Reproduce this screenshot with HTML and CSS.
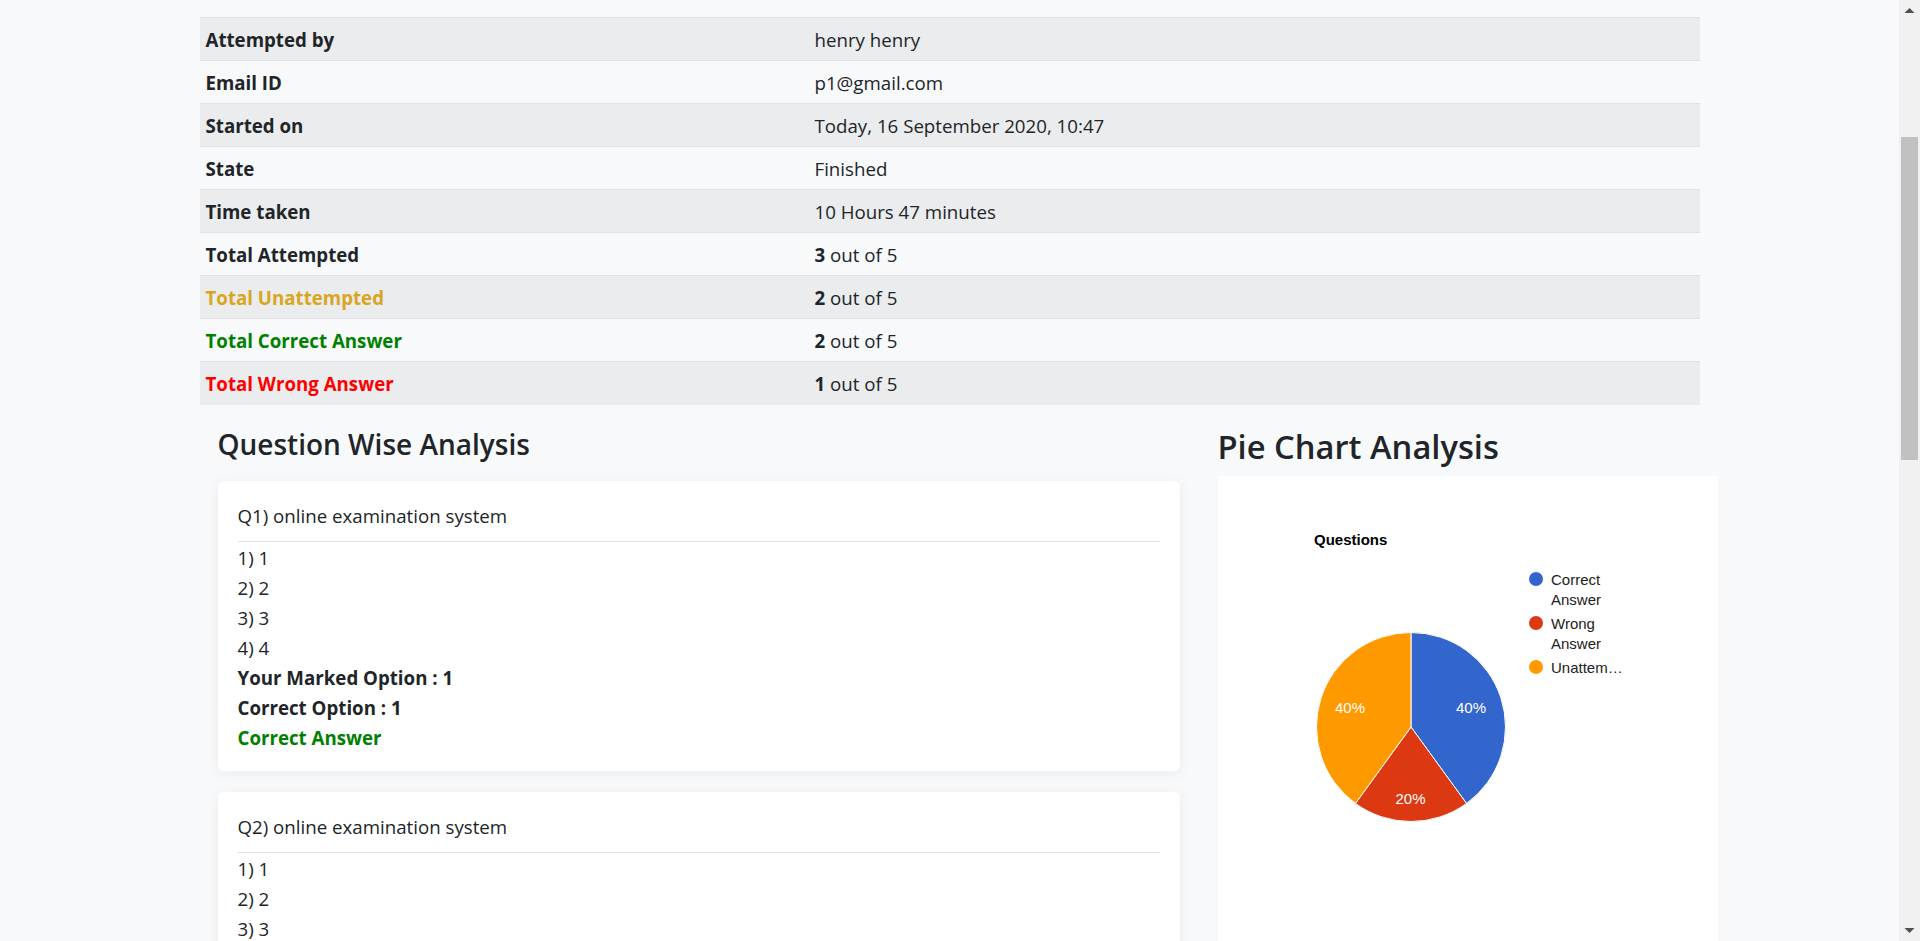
FILE: index.html
```html
<!DOCTYPE html>
<html lang="en">
<head>
<meta charset="utf-8">
<title>Result</title>
<link rel="stylesheet" href="styles.css">
</head>
<body>
<div class="viewport">
  <main class="page">
    <div class="container">
      <table class="summary">
        <tbody>
          <tr><th>Attempted by</th><td>henry henry</td></tr>
          <tr><th>Email ID</th><td>p1@gmail.com</td></tr>
          <tr><th>Started on</th><td>Today, 16 September 2020, 10:47</td></tr>
          <tr><th>State</th><td>Finished</td></tr>
          <tr><th>Time taken</th><td>10 Hours 47 minutes</td></tr>
          <tr><th>Total Attempted</th><td><b>3</b> out of 5</td></tr>
          <tr><th class="c-unatt">Total Unattempted</th><td><b>2</b> out of 5</td></tr>
          <tr><th class="c-correct">Total Correct Answer</th><td><b>2</b> out of 5</td></tr>
          <tr><th class="c-wrong">Total Wrong Answer</th><td><b>1</b> out of 5</td></tr>
        </tbody>
      </table>

      <div class="analysis">
        <section class="qcol">
          <h4 class="qtitle">Question Wise Analysis</h4>
          <div class="qcard">
            <div class="qhead">Q1) online examination system</div>
            <hr class="qrule">
            <div class="opt">1) 1</div>
            <div class="opt">2) 2</div>
            <div class="opt">3) 3</div>
            <div class="opt">4) 4</div>
            <div class="opt strong">Your Marked Option : 1</div>
            <div class="opt strong">Correct Option : 1</div>
            <div class="opt strong c-correct">Correct Answer</div>
          </div>
          <div class="qcard">
            <div class="qhead">Q2) online examination system</div>
            <hr class="qrule">
            <div class="opt">1) 1</div>
            <div class="opt">2) 2</div>
            <div class="opt">3) 3</div>
            <div class="opt">4) 4</div>
            <div class="opt strong">Your Marked Option : 2</div>
            <div class="opt strong">Correct Option : 2</div>
            <div class="opt strong c-correct">Correct Answer</div>
          </div>
        </section>

        <section class="pcol">
          <h3 class="ptitle">Pie Chart Analysis</h3>
          <div class="pcard">
            <svg class="chart" width="500" height="600" viewBox="0 0 500 600" xmlns="http://www.w3.org/2000/svg">
              <text x="96" y="69" class="ch-title">Questions</text>
              <g stroke="#ffffff" stroke-width="1">
                <path d="M193,251 L193,156.5 A94.5,94.5 0 0 1 248.55,327.45 Z" fill="#3366cc"/>
                <path d="M193,251 L248.55,327.45 A94.5,94.5 0 0 1 137.45,327.45 Z" fill="#dc3912"/>
                <path d="M193,251 L137.45,327.45 A94.5,94.5 0 0 1 193,156.5 Z" fill="#ff9900"/>
              </g>
              <text x="253" y="236.5" class="ch-pct" text-anchor="middle">40%</text>
              <text x="132" y="236.5" class="ch-pct" text-anchor="middle">40%</text>
              <text x="192.5" y="327.5" class="ch-pct" text-anchor="middle">20%</text>
              <circle cx="318" cy="103" r="7" fill="#3366cc"/>
              <text x="333" y="108.5" class="ch-leg">Correct</text>
              <text x="333" y="128.5" class="ch-leg">Answer</text>
              <circle cx="318" cy="147" r="7" fill="#dc3912"/>
              <text x="333" y="152.5" class="ch-leg">Wrong</text>
              <text x="333" y="172.5" class="ch-leg">Answer</text>
              <circle cx="318" cy="191" r="7" fill="#ff9900"/>
              <text x="333" y="196.5" class="ch-leg">Unattem…</text>
            </svg>
          </div>
        </section>
      </div>
    </div>
  </main>
  <div class="scrollbar">
    <div class="sb-btn">
      <svg width="21" height="21" viewBox="0 0 21 21"><path d="M5.5 13 L10.5 8 L15.5 13 Z" fill="#505050"/></svg>
    </div>
    <div class="sb-track"><div class="sb-thumb"></div></div>
    <div class="sb-btn">
      <svg width="21" height="21" viewBox="0 0 21 21"><path d="M5.5 8 L10.5 13 L15.5 8 Z" fill="#505050"/></svg>
    </div>
  </div>
</div>
</body>
</html>
```

FILE: styles.css
```css
* { box-sizing: border-box; }

html, body {
  margin: 0;
  padding: 0;
  height: 941px;
  overflow: hidden;
  background: #f8f9fa;
}

body {
  font-family: "Open Sans", "Noto Sans", "Liberation Sans", sans-serif;
  font-size: 18.7px;
  line-height: 30px;
  color: #212529;
}

.viewport {
  display: flex;
  height: 941px;
}

.page {
  flex: 1;
  overflow: hidden;
  min-width: 0;
}

.container {
  width: 1500px;
  margin: 17px auto 0;
}

/* Summary table */
.summary {
  width: 1500px;
  border-collapse: collapse;
}

.summary th,
.summary td {
  padding: 7px 6px 5px;
  border-top: 1px solid #dee2e6;
  text-align: left;
  vertical-align: top;
  height: 43px;
}

.summary th {
  width: 609px;
  font-weight: 700;
}

.summary td b { font-weight: 700; }

.summary tr:nth-child(odd) { background: #ebeced; }

.c-unatt { color: #daa520; }
.c-correct { color: #008000; }
.c-wrong { color: #ff0000; }

/* Analysis area */
.analysis {
  display: flex;
  gap: 38px;
  margin: 21px 0 0 18px;
  width: 1500px;
}

.qcol { width: 962px; flex: none; }
.pcol { width: 500px; flex: none; }

.qtitle {
  margin: 0 0 19px;
  font-size: 28px;
  line-height: 36px;
  font-weight: 600;
}

.ptitle {
  margin: 0 0 8px;
  font-size: 32.7px;
  line-height: 42px;
  font-weight: 600;
}

.qcard {
  background: #ffffff;
  border-radius: 6px;
  box-shadow: 0 2px 14px rgba(0, 0, 0, 0.06);
  padding: 20px 20px 18px;
  margin-bottom: 21px;
}

.qhead { line-height: 30px; }

.qrule {
  border: 0;
  border-top: 1px solid #e0e1e3;
  margin: 10px 0 1px;
  height: 0;
}

.opt { line-height: 30px; }
.strong { font-weight: 700; }

.pcard {
  background: #ffffff;
  height: 600px;
}

.chart { display: block; }

.ch-title {
  font-family: "Liberation Sans", Arial, sans-serif;
  font-size: 15px;
  font-weight: 700;
  fill: #000000;
}

.ch-pct {
  font-family: "Liberation Sans", Arial, sans-serif;
  font-size: 15px;
  fill: #ffffff;
}

.ch-leg {
  font-family: "Liberation Sans", Arial, sans-serif;
  font-size: 15px;
  fill: #222222;
}

/* Scrollbar */
.scrollbar {
  width: 21px;
  flex: none;
  background: #f1f1f1;
  display: flex;
  flex-direction: column;
}

.sb-btn { height: 21px; flex: none; }
.sb-btn svg { display: block; }

.sb-track {
  flex: 1;
  padding: 116px 2px 0 2px;
}

.sb-thumb {
  height: 323px;
  background: #c1c1c1;
}
```
